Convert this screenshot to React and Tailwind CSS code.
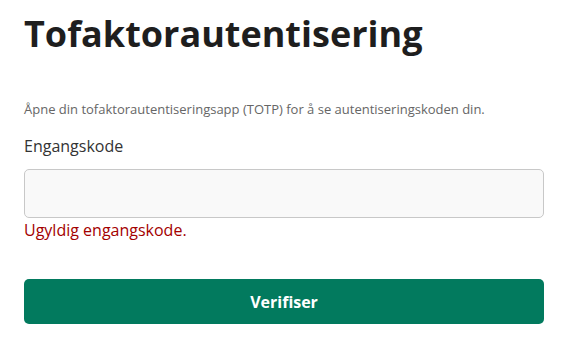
export default function App() {
  return (
    <div className="min-h-screen bg-white pl-6 pr-[25px] pt-[12px] text-[#222]" style={{ fontFamily: '"Open Sans", sans-serif' }}>
      <h1 className="text-[36px] font-bold leading-[44px] text-[#1e1e1e]">Tofaktorautentisering</h1>
      <p className="mt-[44px] text-[13px] leading-[18px] text-[#666]">
        Åpne din tofaktorautentiseringsapp (TOTP) for å se autentiseringskoden din.
      </p>
      <label className="mt-[17px] block text-[16px] leading-[22px] text-[#333]">Engangskode</label>
      <input
        type="text"
        className="mt-[12px] block h-[49px] w-full rounded-[5px] border border-[#c8c8c8] bg-[#f9f9f9] px-3 text-[16px] outline-none"
      />
      <div className="mt-0 text-[16px] leading-[24px] text-[#a30000]">Ugyldig engangskode.</div>
      <button className="mt-[37px] flex h-[45px] w-full items-center justify-center rounded-[5px] bg-[#027a5e] text-[16px] font-bold text-white">
        Verifiser
      </button>
    </div>
  );
}
